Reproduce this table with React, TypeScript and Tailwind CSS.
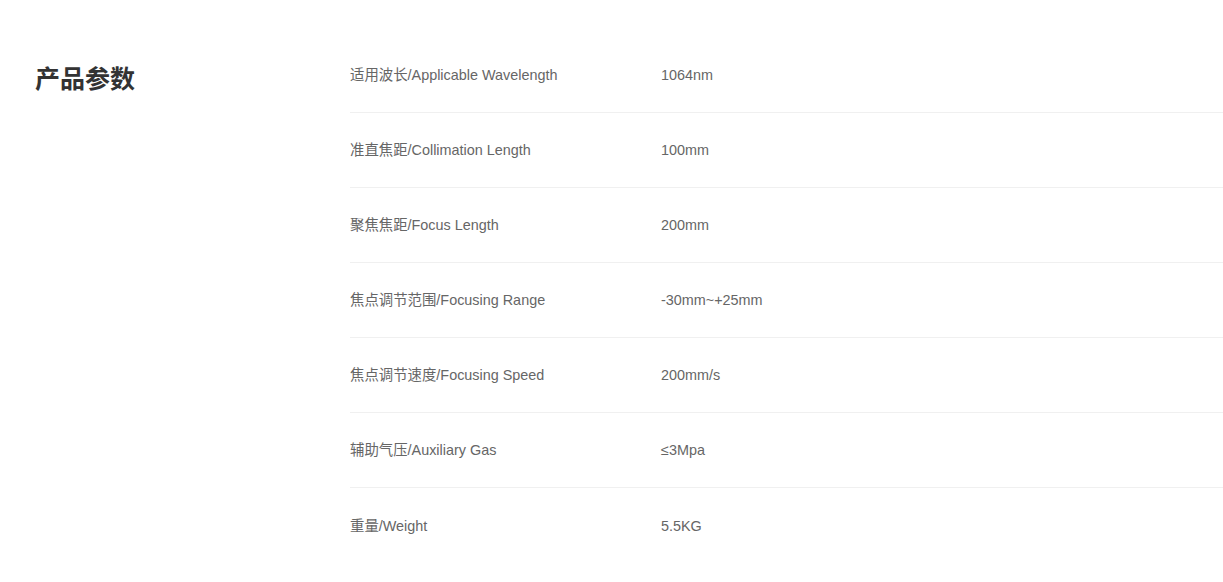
import React from "react";

const rows: [string, string][] = [
  ["适用波长/Applicable Wavelength", "1064nm"],
  ["准直焦距/Collimation Length", "100mm"],
  ["聚焦焦距/Focus Length", "200mm"],
  ["焦点调节范围/Focusing Range", "-30mm~+25mm"],
  ["焦点调节速度/Focusing Speed", "200mm/s"],
  ["辅助气压/Auxiliary Gas", "≤3Mpa"],
  ["重量/Weight", "5.5KG"],
];

export default function App() {
  return (
    <div
      className="w-[1223px] h-[582px] bg-white flex pl-[35px] pt-[38px] overflow-hidden"
      style={{ fontFamily: '"Liberation Sans", Arial, "Noto Sans CJK SC", sans-serif' }}
    >
      <div className="w-[315px] shrink-0 pt-[25px]">
        <h2 className="text-[25px] leading-[32px] font-bold text-[#333]">产品参数</h2>
      </div>
      <div className="flex-1">
        {rows.map(([k, v], i) => (
          <div
            key={i}
            className={`flex items-center h-[75px] pt-[2px] text-[14.4px] text-[#666] ${
              i < rows.length - 1 ? "border-b border-[#f0f0f0]" : ""
            }`}
          >
            <div className="w-[311px] shrink-0">{k}</div>
            <div>{v}</div>
          </div>
        ))}
      </div>
    </div>
  );
}
